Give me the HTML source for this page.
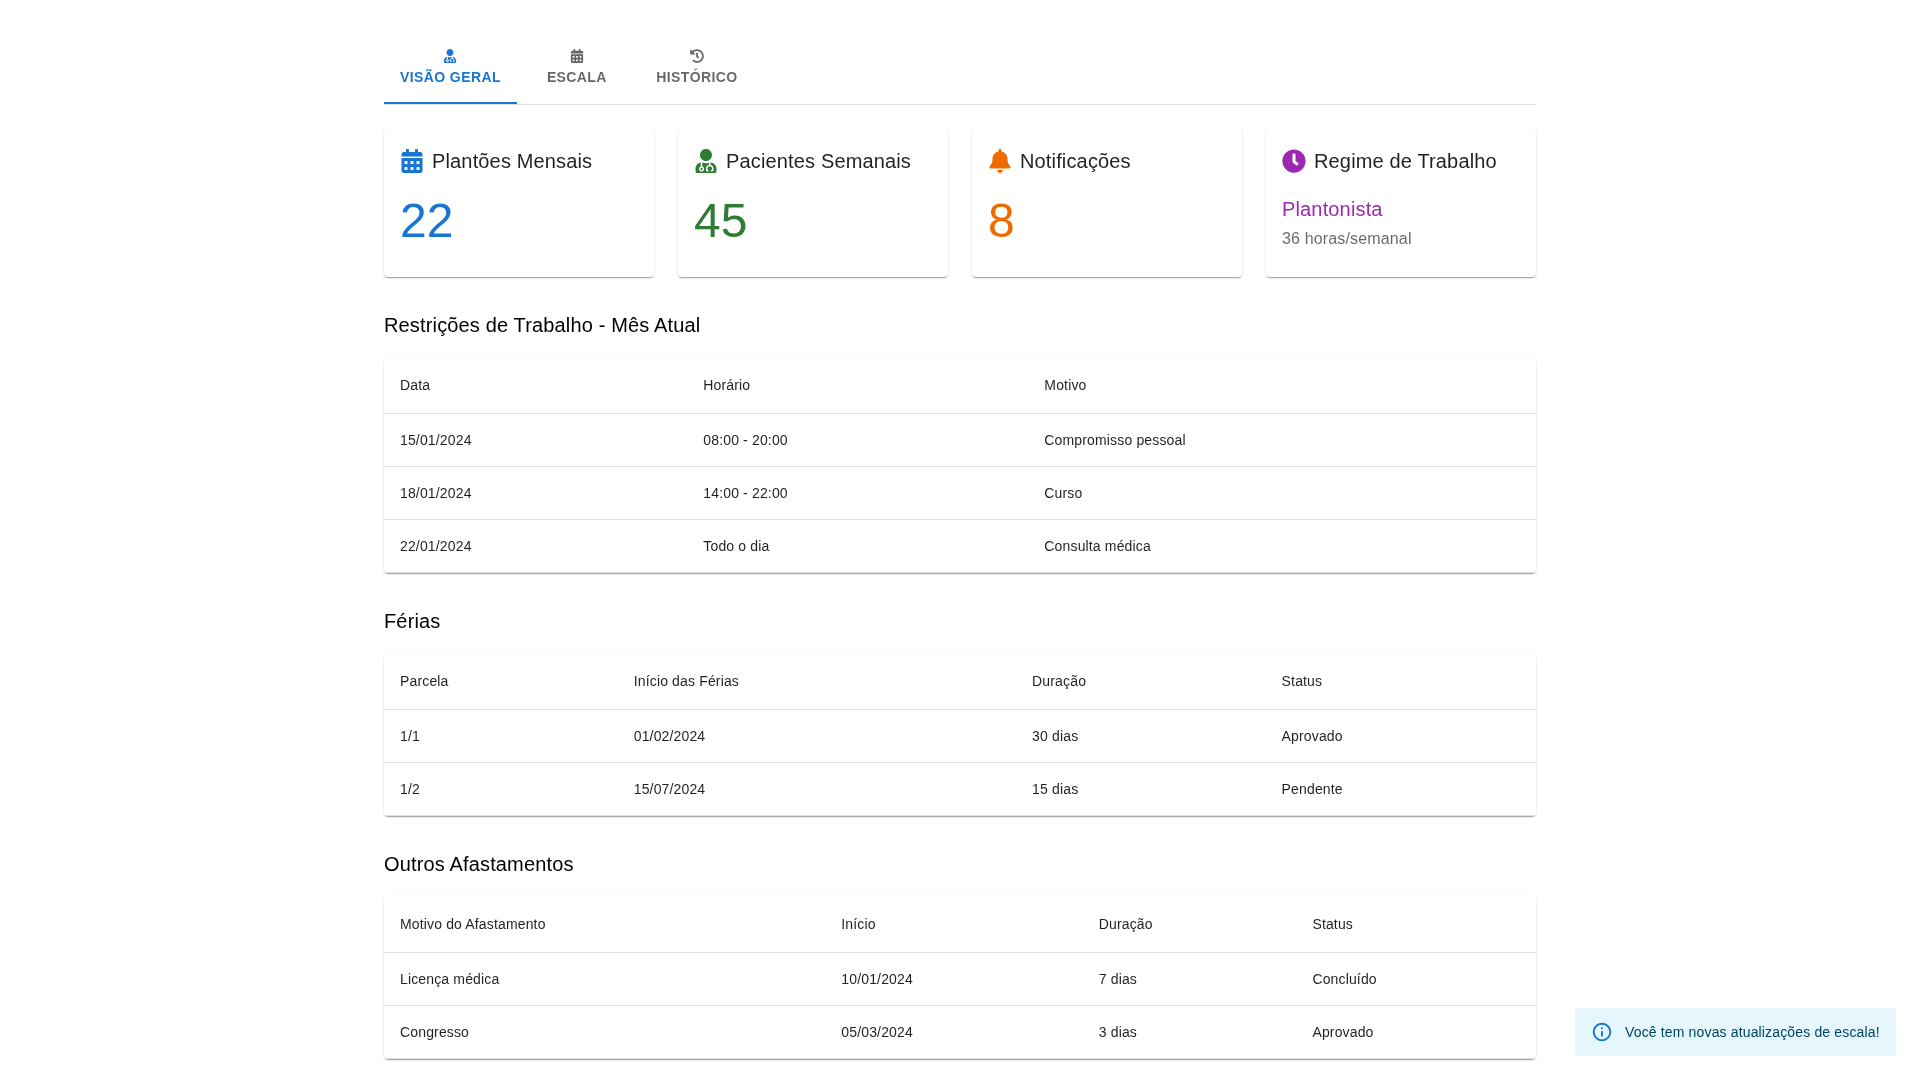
<!DOCTYPE html>
<html lang="pt">
<head>
<meta charset="utf-8">
<title>Painel</title>
<style>
*{box-sizing:border-box;margin:0;padding:0}
html,body{width:1920px;height:1080px;overflow:hidden;background:#fff}
body{font-family:"Liberation Sans",sans-serif;color:rgba(0,0,0,0.87);font-size:16px;line-height:1.5}
.container{width:1200px;margin:0 auto;padding:0 24px;will-change:transform}
.tabsbox{margin-top:32px;border-bottom:1px solid rgba(0,0,0,0.12);margin-bottom:24px;height:73px;position:relative}
.tabs{display:flex;height:72px;position:relative}
.tab{min-width:120px;min-height:72px;padding:9px 16px;display:flex;flex-direction:column;align-items:center;justify-content:center;font-size:14px;font-weight:700;letter-spacing:0.02857em;line-height:1.25;text-transform:uppercase;color:rgba(0,0,0,0.6)}
.tab svg{width:14px;height:14px;margin-bottom:6px;fill:currentColor;display:block}
.tab.active{color:#1976d2}
.indicator{position:absolute;left:0;bottom:0;height:2px;background:#1976d2}
.grid{display:flex;gap:24px}
.card{width:270px;height:148px;background:#fff;border-radius:4px;box-shadow:0px 2px 1px -1px rgba(0,0,0,0.2),0px 1px 1px 0px rgba(0,0,0,0.14),0px 1px 3px 0px rgba(0,0,0,0.12);padding:16px 16px 24px}
.ch{display:flex;align-items:center;margin-bottom:16px}
.ch svg{height:24px;width:24px !important;fill:currentColor;margin-right:8px;flex:none}
.ch span{font-size:20px;line-height:1.6;font-weight:500;letter-spacing:0.0075em;color:rgba(0,0,0,0.87)}
.reg{font-size:20px;line-height:1.6;letter-spacing:0.0075em}
.regs{font-size:16px;line-height:1.5;margin-top:2px;letter-spacing:0.00938em;color:rgba(0,0,0,0.6)}
.num{font-size:48px;line-height:1.167;font-weight:400}
.sec{margin-top:32px}
.h6{color:#000;font-size:20px;line-height:1.6;font-weight:500;letter-spacing:0.0075em;margin-bottom:16px}
.paper{background:#fff;border-radius:4px;box-shadow:0px 2px 1px -1px rgba(0,0,0,0.2),0px 1px 1px 0px rgba(0,0,0,0.14),0px 1px 3px 0px rgba(0,0,0,0.12);overflow:hidden}
table{width:100%;border-collapse:collapse;border-spacing:0}
th,td{text-align:left;padding:16px;font-size:14px;border-bottom:1px solid rgba(224,224,224,1);color:rgba(0,0,0,0.87);font-weight:400;letter-spacing:0.01071em}
th{line-height:1.5rem}
td{line-height:1.43}
.snack{will-change:transform;position:fixed;right:24px;bottom:24px;background:rgb(229,246,253);color:rgb(1,67,97);border-radius:4px;padding:6px 16px;display:flex;font-size:14px;line-height:1.43;letter-spacing:0.01071em}
.snack svg{width:22px;height:22px;fill:#1976d2;margin:7px 12px 7px 0}
.snack .msg{padding:8px 0}
</style>
</head>
<body>
<div class="container">
  <div class="tabsbox">
    <div class="tabs">
      <div class="tab active"><svg viewBox="0 0 448 512"><path d="M224 256c70.7 0 128-57.3 128-128S294.7 0 224 0 96 57.3 96 128s57.3 128 128 128zM104 424c0 13.3 10.7 24 24 24s24-10.7 24-24-10.7-24-24-24-24 10.7-24 24zm216-135.4v49c36.5 7.4 64 39.8 64 78.4v41.7c0 7.6-5.4 14.2-12.9 15.7l-32.2 6.4c-4.3.9-8.5-1.9-9.4-6.3l-3.1-15.7c-.9-4.3 1.9-8.6 6.3-9.4l19.3-3.9V416c0-62.8-96-65.1-96 1.9v26.7l19.3 3.9c4.3.9 7.1 5.1 6.3 9.4l-3.1 15.7c-.9 4.3-5.1 7.1-9.4 6.3l-31.2-4.2c-7.9-1.1-13.8-7.8-13.8-15.9V416c0-38.6 27.5-70.9 64-78.4v-45.2c-2.2.7-4.4 1.1-6.6 1.9-18 6.3-37.3 9.8-57.4 9.800s-39.4-3.5-57.4-9.8c-7.4-2.6-14.9-4.2-22.6-5.2v81.6c23.1 6.9 40 28.1 40 53.4 0 30.9-25.1 56-56 56s-56-25.1-56-56c0-25.3 16.9-46.5 40-53.4v-80.4C48.5 301 0 355.8 0 422.4v44.8C0 491.9 20.1 512 44.8 512h358.4c24.7 0 44.8-20.1 44.8-44.8v-44.800c0-72-56.8-130.3-128-133.8z"/></svg>Visão Geral</div>
      <div class="tab"><svg viewBox="0 0 448 512"><path d="M0 464c0 26.5 21.5 48 48 48h352c26.5 0 48-21.5 48-48V192H0v272zm320-196c0-6.6 5.4-12 12-12h40c6.6 0 12 5.4 12 12v40c0 6.6-5.4 12-12 12h-40c-6.6 0-12-5.4-12-12v-40zm0 128c0-6.6 5.4-12 12-12h40c6.6 0 12 5.4 12 12v40c0 6.6-5.4 12-12 12h-40c-6.6 0-12-5.4-12-12v-40zM192 268c0-6.6 5.4-12 12-12h40c6.6 0 12 5.4 12 12v40c0 6.6-5.4 12-12 12h-40c-6.6 0-12-5.4-12-12v-40zm0 128c0-6.6 5.4-12 12-12h40c6.6 0 12 5.4 12 12v40c0 6.6-5.4 12-12 12h-40c-6.6 0-12-5.4-12-12v-40zM64 268c0-6.6 5.4-12 12-12h40c6.6 0 12 5.4 12 12v40c0 6.6-5.4 12-12 12H76c-6.6 0-12-5.4-12-12v-40zm0 128c0-6.6 5.4-12 12-12h40c6.6 0 12 5.4 12 12v40c0 6.6-5.4 12-12 12H76c-6.6 0-12-5.4-12-12v-40zM400 64h-48V16c0-8.8-7.2-16-16-16h-32c-8.8 0-16 7.2-16 16v48H160V16c0-8.8-7.2-16-16-16h-32c-8.8 0-16 7.2-16 16v48H48C21.5 64 0 85.5 0 112v48h448v-48c0-26.5-21.5-48-48-48z"/></svg>Escala</div>
      <div class="tab"><svg viewBox="0 0 512 512"><path d="M504 255.531c.253 136.64-111.18 248.372-247.82 248.468-59.015.042-113.223-20.53-155.822-54.911-11.077-8.94-11.905-25.541-1.839-35.607l11.267-11.267c8.609-8.609 22.353-9.551 31.891-1.984C173.062 425.135 212.781 440 256 440c101.705 0 184-82.311 184-184 0-101.705-82.311-184-184-184-48.814 0-93.149 18.969-126.068 49.932l50.754 50.754c10.08 10.08 2.941 27.314-11.313 27.314H24c-8.837 0-16-7.163-16-16V38.627c0-14.254 17.234-21.393 27.314-11.314l49.372 49.372C129.209 34.136 189.552 8 256 8c136.81 0 247.747 110.78 248 247.531zm-180.912 78.784l9.823-12.63c8.138-10.463 6.253-25.542-4.21-33.679L288 256.349V152c0-13.255-10.745-24-24-24h-16c-13.255 0-24 10.745-24 24v135.651l65.409 50.874c10.463 8.137 25.541 6.253 33.679-4.21z"/></svg>Histórico</div>
      <div class="indicator" id="ind" style="width:133px"></div>
    </div>
  </div>

  <div class="grid">
    <div class="card"><div class="ch"><svg viewBox="0 0 448 512" style="width:21px;color:#1976d2"><path d="M0 464c0 26.5 21.5 48 48 48h352c26.5 0 48-21.5 48-48V192H0v272zm320-196c0-6.6 5.4-12 12-12h40c6.6 0 12 5.4 12 12v40c0 6.6-5.4 12-12 12h-40c-6.6 0-12-5.4-12-12v-40zm0 128c0-6.6 5.4-12 12-12h40c6.6 0 12 5.4 12 12v40c0 6.6-5.4 12-12 12h-40c-6.6 0-12-5.4-12-12v-40zM192 268c0-6.6 5.4-12 12-12h40c6.6 0 12 5.4 12 12v40c0 6.6-5.4 12-12 12h-40c-6.6 0-12-5.4-12-12v-40zm0 128c0-6.6 5.4-12 12-12h40c6.6 0 12 5.4 12 12v40c0 6.6-5.4 12-12 12h-40c-6.6 0-12-5.4-12-12v-40zM64 268c0-6.6 5.4-12 12-12h40c6.6 0 12 5.4 12 12v40c0 6.6-5.4 12-12 12H76c-6.6 0-12-5.4-12-12v-40zm0 128c0-6.6 5.4-12 12-12h40c6.6 0 12 5.4 12 12v40c0 6.6-5.4 12-12 12H76c-6.6 0-12-5.4-12-12v-40zM400 64h-48V16c0-8.8-7.2-16-16-16h-32c-8.8 0-16 7.2-16 16v48H160V16c0-8.8-7.2-16-16-16h-32c-8.8 0-16 7.2-16 16v48H48C21.5 64 0 85.5 0 112v48h448v-48c0-26.5-21.5-48-48-48z"/></svg><span>Plantões Mensais</span></div><div class="num" style="color:#1976d2">22</div></div>
    <div class="card"><div class="ch"><svg viewBox="0 0 448 512" style="width:21px;color:#2e7d32"><path d="M224 256c70.7 0 128-57.3 128-128S294.7 0 224 0 96 57.3 96 128s57.3 128 128 128zM104 424c0 13.3 10.7 24 24 24s24-10.7 24-24-10.7-24-24-24-24 10.7-24 24zm216-135.4v49c36.5 7.4 64 39.8 64 78.4v41.7c0 7.6-5.4 14.2-12.9 15.7l-32.2 6.4c-4.3.9-8.5-1.9-9.4-6.3l-3.1-15.7c-.9-4.3 1.9-8.6 6.3-9.4l19.3-3.9V416c0-62.8-96-65.1-96 1.9v26.7l19.3 3.9c4.3.9 7.1 5.1 6.3 9.4l-3.1 15.7c-.9 4.3-5.1 7.1-9.4 6.3l-31.2-4.2c-7.9-1.1-13.8-7.8-13.8-15.9V416c0-38.6 27.5-70.9 64-78.4v-45.2c-2.2.7-4.4 1.1-6.6 1.9-18 6.3-37.3 9.8-57.4 9.800s-39.4-3.5-57.4-9.8c-7.4-2.6-14.9-4.2-22.6-5.2v81.6c23.1 6.9 40 28.1 40 53.4 0 30.9-25.1 56-56 56s-56-25.1-56-56c0-25.3 16.9-46.5 40-53.4v-80.4C48.5 301 0 355.8 0 422.4v44.8C0 491.9 20.1 512 44.8 512h358.4c24.7 0 44.8-20.1 44.8-44.8v-44.800c0-72-56.8-130.3-128-133.8z"/></svg><span>Pacientes Semanais</span></div><div class="num" style="color:#2e7d32">45</div></div>
    <div class="card"><div class="ch"><svg viewBox="0 0 448 512" style="width:21px;color:#ed6c02"><path d="M224 512c35.32 0 63.97-28.65 63.97-64H160.03c0 35.35 28.65 64 63.97 64zm215.39-149.71c-19.32-20.76-55.47-51.99-55.470-154.29 0-77.7-54.48-139.9-127.94-155.16V32c0-17.67-14.32-32-31.98-32s-31.98 14.33-31.98 32v20.84C118.56 68.1 64.08 130.3 64.08 208c0 102.3-36.15 133.53-55.47 154.29-6 6.45-8.66 14.16-8.61 21.71.11 16.4 12.98 32 32.1 32h383.8c19.12 0 32-15.6 32.1-32 .05-7.55-2.61-15.27-8.61-21.71z"/></svg><span>Notificações</span></div><div class="num" style="color:#ed6c02">8</div></div>
    <div class="card"><div class="ch"><svg viewBox="0 0 512 512" style="width:24px;color:#9c27b0"><path d="M256,8C119,8,8,119,8,256S119,504,256,504,504,393,504,256,393,8,256,8Zm92.49,313h0l-20,25a16,16,0,0,1-22.49,2.5h0l-67-49.72a40,40,0,0,1-15-31.23V112a16,16,0,0,1,16-16h32a16,16,0,0,1,16,16V256l58,42.5A16,16,0,0,1,348.49,321Z"/></svg><span>Regime de Trabalho</span></div><div class="reg" style="color:#9c27b0">Plantonista</div><div class="regs">36 horas/semanal</div></div>
  </div>

  <div class="sec"><div class="h6">Restrições de Trabalho - Mês Atual</div><div class="paper"><table><thead><tr><th>Data</th><th>Horário</th><th>Motivo</th></tr></thead><tbody><tr><td>15/01/2024</td><td>08:00 - 20:00</td><td>Compromisso pessoal</td></tr><tr><td>18/01/2024</td><td>14:00 - 22:00</td><td>Curso</td></tr><tr><td>22/01/2024</td><td>Todo o dia</td><td>Consulta médica</td></tr></tbody></table></div></div>
  <div class="sec"><div class="h6">Férias</div><div class="paper"><table><thead><tr><th>Parcela</th><th>Início das Férias</th><th>Duração</th><th>Status</th></tr></thead><tbody><tr><td>1/1</td><td>01/02/2024</td><td>30 dias</td><td>Aprovado</td></tr><tr><td>1/2</td><td>15/07/2024</td><td>15 dias</td><td>Pendente</td></tr></tbody></table></div></div>
  <div class="sec"><div class="h6">Outros Afastamentos</div><div class="paper"><table><thead><tr><th>Motivo do Afastamento</th><th>Início</th><th>Duração</th><th>Status</th></tr></thead><tbody><tr><td>Licença médica</td><td>10/01/2024</td><td>7 dias</td><td>Concluído</td></tr><tr><td>Congresso</td><td>05/03/2024</td><td>3 dias</td><td>Aprovado</td></tr></tbody></table></div></div>
</div>
<div class="snack"><svg viewBox="0 0 24 24"><path d="M11 7h2v2h-2zm0 4h2v6h-2zm1-9C6.48 2 2 6.48 2 12s4.48 10 10 10 10-4.48 10-10S17.52 2 12 2zm0 18c-4.41 0-8-3.590-8-8s3.59-8 8-8 8 3.59 8 8-3.59 8-8 8z"/></svg><div class="msg">Você tem novas atualizações de escala!</div></div>
</body>
</html>
